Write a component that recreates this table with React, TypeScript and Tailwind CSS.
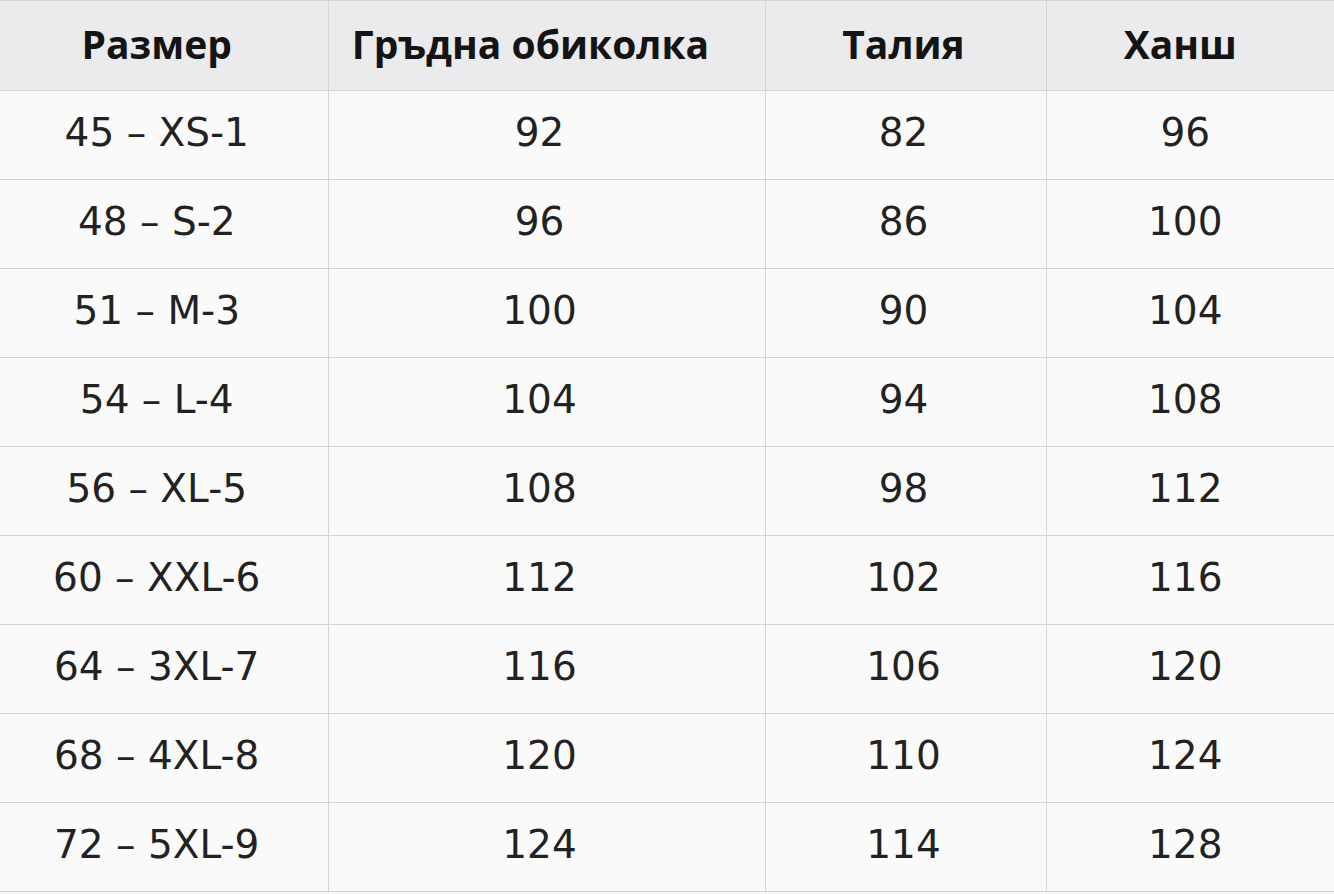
const headers = ['Размер', 'Гръдна обиколка', 'Талия', 'Ханш'];

const rows = [
  ['45 – XS-1', '92', '82', '96'],
  ['48 – S-2', '96', '86', '100'],
  ['51 – M-3', '100', '90', '104'],
  ['54 – L-4', '104', '94', '108'],
  ['56 – XL-5', '108', '98', '112'],
  ['60 – XXL-6', '112', '102', '116'],
  ['64 – 3XL-7', '116', '106', '120'],
  ['68 – 4XL-8', '120', '110', '124'],
  ['72 – 5XL-9', '124', '114', '128'],
];

// widths + a little right padding: text sits slightly left of centre in the picture
const headCols = [
  'w-[328px] pr-[14px]',
  'w-[437px] pr-[32px]',
  'w-[281px] pr-[4px]',
  'w-[288px] pr-[20px] border-r-0',
];
const bodyCols = ['pr-[14px]', 'pr-[14px]', 'pr-[4px]', 'pr-[10px] border-r-0'];

export default function App() {
  return (
    <div className="w-[1334px] h-[894px] bg-[#fafafa] overflow-hidden">
      <table className="w-[1334px] border-collapse table-fixed">
        <thead>
          <tr className="h-[90px] bg-[#ebebed]">
            {headers.map((h, i) => (
              <th
                key={h}
                className={`${headCols[i]} border border-[#d4d4d6] border-l-0 pb-[2px] text-center font-['Open_Sans',sans-serif] text-[39px] font-bold text-[#141414]`}
              >
                {h}
              </th>
            ))}
          </tr>
        </thead>
        <tbody>
          {rows.map((r) => (
            <tr key={r[0]} className="h-[89px]">
              {r.map((c, i) => (
                <td
                  key={i}
                  className={`${bodyCols[i]} border border-[#d4d4d6] border-l-0 pb-[4px] text-center font-['DejaVu_Sans',sans-serif] text-[39px] text-[#222222]`}
                >
                  {c}
                </td>
              ))}
            </tr>
          ))}
        </tbody>
      </table>
    </div>
  );
}
